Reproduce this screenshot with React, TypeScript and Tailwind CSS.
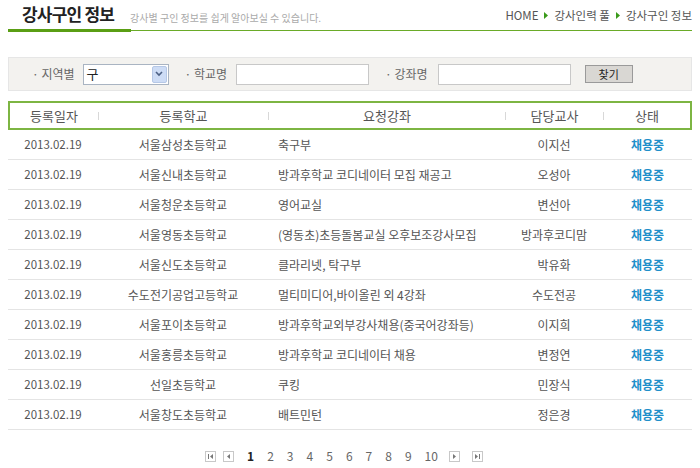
import React from "react";

const rows = [
  ["2013.02.19", "서울삼성초등학교", "축구부", "이지선"],
  ["2013.02.19", "서울신내초등학교", "방과후학교 코디네이터 모집 재공고", "오성아"],
  ["2013.02.19", "서울청운초등학교", "영어교실", "변선아"],
  ["2013.02.19", "서울영동초등학교", "(영동초)초등돌봄교실 오후보조강사모집", "방과후코디맘"],
  ["2013.02.19", "서울신도초등학교", "클라리넷, 탁구부", "박유화"],
  ["2013.02.19", "수도전기공업고등학교", "멀티미디어,바이올린 외 4강좌", "수도전공"],
  ["2013.02.19", "서울포이초등학교", "방과후학교외부강사채용(중국어강좌등)", "이지희"],
  ["2013.02.19", "서울홍릉초등학교", "방과후학교 코디네이터 채용", "변정연"],
  ["2013.02.19", "선일초등학교", "쿠킹", "민장식"],
  ["2013.02.19", "서울창도초등학교", "배트민턴", "정은경"],
];

const font = { fontFamily: '"Noto Sans CJK KR", "Noto Sans", sans-serif' };

function Tri() {
  return (
    <svg width="4" height="7" viewBox="0 0 4 7" className="mx-[6px]">
      <path d="M0 0 L4 3.5 L0 7 Z" fill="#3a9a1a" />
    </svg>
  );
}

function PageBtn({ kind }: { kind: "first" | "prev" | "next" | "last" }) {
  return (
    <span className="inline-flex h-[11px] w-[11px] items-center justify-center border border-[#c8c8c8] bg-white">
      <svg width="7" height="5" viewBox="0 0 7 5">
        {kind === "first" && (
          <>
            <rect x="1" y="0" width="1" height="5" fill="#777" />
            <path d="M6 0 L3 2.5 L6 5 Z" fill="#777" />
          </>
        )}
        {kind === "prev" && <path d="M5 0 L2 2.5 L5 5 Z" fill="#777" />}
        {kind === "next" && <path d="M2 0 L5 2.5 L2 5 Z" fill="#777" />}
        {kind === "last" && (
          <>
            <path d="M1 0 L4 2.5 L1 5 Z" fill="#777" />
            <rect x="5" y="0" width="1" height="5" fill="#777" />
          </>
        )}
      </svg>
    </span>
  );
}

function Sep() {
  return <span className="h-[8px] w-px bg-[#d8d8d8]" />;
}

export default function App() {
  return (
    <div className="h-[468px] w-[700px] overflow-hidden bg-white text-[12px] text-[#555]" style={font}>
      {/* Header */}
      <div className="mx-[8px] flex h-[29px] items-end justify-between pb-[4px]">
        <div className="flex items-end">
          <span className="ml-[14px] text-[17px] font-bold leading-[22px] tracking-[-0.8px] text-[#222]">강사구인 정보</span>
          <span className="ml-[16px] text-[10px] leading-[14px] text-[#aaa]">강사별 구인 정보를 쉽게 알아보실 수 있습니다.</span>
        </div>
        <div className="mb-[3px] flex items-center text-[11.5px] leading-[14px] text-[#555]">
          <span>HOME</span>
          <Tri />
          <span>강사인력 풀</span>
          <Tri />
          <span>강사구인 정보</span>
        </div>
      </div>
      <div className="mx-[8px] flex items-start">
        <div className="h-[3px] w-[123px] bg-[#5a9e14]" />
        <div className="mt-[1px] h-px flex-1 bg-[#6aab28]" />
      </div>

      {/* Search */}
      <div className="mx-[8px] mt-[25px] flex h-[34px] items-center border border-[#e6e6e6] bg-[#f3f2ef]">
        <span className="ml-[23px] text-[#666]">· 지역별</span>
        <div className="ml-[8px] flex h-[21px] w-[86px] items-center justify-between border border-[#a9b4c2] bg-white pl-[3px] pr-[1px]">
          <span className="text-[13px] text-[#222]">구</span>
          <span className="flex h-[17px] w-[15px] items-center justify-center rounded-[2px] border border-[#b6c8e6] bg-[#cddcf5]">
            <svg width="8" height="6" viewBox="0 0 8 6">
              <path d="M1 1 L4 4 L7 1" stroke="#4d6185" strokeWidth="1.6" fill="none" />
            </svg>
          </span>
        </div>
        <span className="ml-[16px] text-[#666]">· 학교명</span>
        <div className="ml-[9px] h-[21px] w-[133px] border border-[#c8c8c8] bg-white" />
        <span className="ml-[16px] text-[#666]">· 강좌명</span>
        <div className="ml-[10px] h-[21px] w-[133px] border border-[#c8c8c8] bg-white" />
        <button className="ml-[14px] h-[18px] w-[48px] border border-[#9a9a9a] bg-[#d9d7d3] text-[11px] leading-none text-[#222]">찾기</button>
      </div>

      {/* Table */}
      <div className="mx-[8px] mt-[10px]">
        <div className="flex h-[29px] items-center border-2 border-[#7db543] text-[13px] text-[#555]">
          <div className="w-[88px] text-center">등록일자</div>
          <Sep />
          <div className="w-[169px] text-center">등록학교</div>
          <Sep />
          <div className="w-[236px] text-center">요청강좌</div>
          <Sep />
          <div className="w-[97px] text-center">담당교사</div>
          <Sep />
          <div className="flex-1 text-center">상태</div>
        </div>
        {rows.map((r, i) => (
          <div key={i} className="flex h-[30px] items-center border-b border-[#e4e4e4] text-[12px] text-[#555]">
            <div className="w-[90px] text-center text-[11.5px]">{r[0]}</div>
            <div className="w-[170px] text-center">{r[1]}</div>
            <div className="w-[237px] truncate pl-[10px]">{r[2]}</div>
            <div className="w-[98px] text-center">{r[3]}</div>
            <div className="flex-1 text-center font-bold text-[#1f8fc9]">채용중</div>
          </div>
        ))}
      </div>

      {/* Pagination */}
      <div className="mt-[17px] flex items-center justify-center text-[12px] text-[#666]">
        <div className="ml-[-12px] flex items-center">
          <PageBtn kind="first" />
          <span className="ml-[7px]" />
          <PageBtn kind="prev" />
          <div className="ml-[13px] flex items-center gap-[13px]">
            <span className="font-bold text-[#222]">1</span>
            {[2, 3, 4, 5, 6, 7, 8, 9, 10].map((n) => (
              <span key={n}>{n}</span>
            ))}
          </div>
          <span className="ml-[11px]" />
          <PageBtn kind="next" />
          <span className="ml-[12px]" />
          <PageBtn kind="last" />
        </div>
      </div>
    </div>
  );
}
